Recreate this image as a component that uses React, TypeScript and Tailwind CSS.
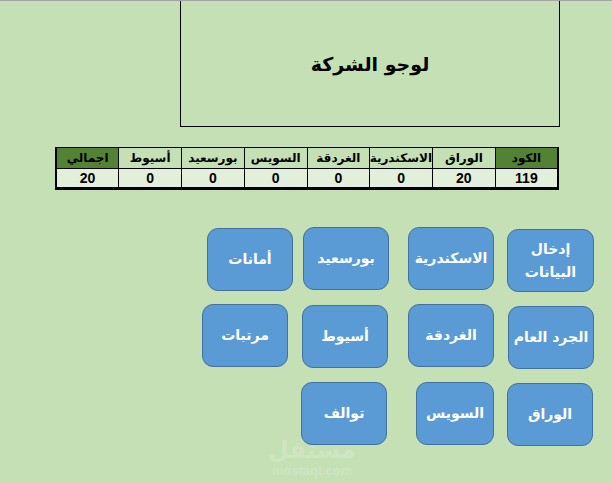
import React from "react";

const arabic = { fontFamily: '"DejaVu Sans", "Noto Sans", sans-serif' };

type BtnProps = { label: React.ReactNode; className?: string };

function ShapeButton({ label, className = "" }: BtnProps) {
  return (
    <div
      className={`flex h-[63px] shrink-0 items-center justify-center rounded-[11px] border border-[#41719c] bg-[#5b9bd5] text-center text-[14px] font-bold leading-[23px] text-white ${className}`}
      style={arabic}
      dir="rtl"
    >
      {label}
    </div>
  );
}

const headers = ["اجمالي", "أسيوط", "بورسعيد", "السويس", "الغردقة", "الاسكندرية", "الوراق", "الكود"];
const values = ["20", "0", "0", "0", "0", "0", "20", "119"];

export default function App() {
  return (
    <div className="relative h-[483px] w-[612px] overflow-hidden bg-[#c5e0b4]">
      <div className="h-[1px] w-full bg-[#a3a3a3]" />

      {/* logo placeholder frame */}
      <div className="ml-[180px] flex h-[126px] w-[380px] items-center justify-center border-x border-b border-black">
        <span className="mt-[2px] text-[19px] font-bold text-black" style={arabic} dir="rtl">
          لوجو الشركة
        </span>
      </div>

      {/* summary sheet */}
      <table className="ml-[55px] mt-[20px] w-[504px] table-fixed border-collapse border-x-2 border-black">
        <tbody>
          <tr className="h-[21px]">
            {headers.map((h, i) => (
              <td
                key={h}
                className={`border border-black p-0 text-center text-[12px] font-bold leading-[19px] text-black ${
                  i === 0 || i === headers.length - 1 ? "bg-[#548235]" : "bg-[#c5e0b4]"
                }`}
                style={arabic}
                dir="rtl"
              >
                {h}
              </td>
            ))}
          </tr>
          <tr className="h-[20px] border-b-[3px] border-black">
            {values.map((v, i) => (
              <td
                key={i}
                className="border border-b-[3px] border-black bg-[#e2efda] p-0 text-center text-[14px] font-bold leading-[18px] text-black"
                style={{ fontFamily: '"Liberation Sans", Arial, sans-serif' }}
              >
                {v}
              </td>
            ))}
          </tr>
        </tbody>
      </table>

      {/* navigation shapes */}
      <div className="mt-[37px] flex h-[65px] items-start">
        <ShapeButton label="أمانات" className="ml-[207px] mt-[1px] w-[86px]" />
        <ShapeButton label="بورسعيد" className="ml-[10px] w-[86px]" />
        <ShapeButton label="الاسكندرية" className="ml-[19px] w-[86px]" />
        <ShapeButton
          label={
            <span>
              إدخال
              <br />
              البيانات
            </span>
          }
          className="ml-[13px] mt-[2px] w-[87px]"
        />
      </div>

      <div className="mt-[12px] flex h-[65px] items-start">
        <ShapeButton label="مرتبات" className="ml-[202px] w-[86px]" />
        <ShapeButton label="أسيوط" className="ml-[14px] mt-[1px] w-[86px]" />
        <ShapeButton label="الغردقة" className="ml-[20px] w-[86px]" />
        <ShapeButton label="الجرد العام" className="ml-[14px] mt-[2px] w-[86px]" />
      </div>

      <div className="mt-[13px] flex h-[65px] items-start">
        <ShapeButton label="توالف" className="ml-[301px] w-[86px]" />
        <ShapeButton label="السويس" className="ml-[29px] w-[78px]" />
        <ShapeButton label="الوراق" className="ml-[13px] mt-[1px] w-[86px]" />
      </div>

      {/* faint site mark */}
      <div className="pointer-events-none absolute left-[268px] top-[438px] flex flex-col items-center leading-none text-white/20">
        <span className="text-[24px] font-bold" style={arabic}>
          مستقل
        </span>
        <span
          className="mt-[2px] text-[13px] font-bold"
          style={{ fontFamily: '"Liberation Sans", Arial, sans-serif' }}
        >
          mostaql.com
        </span>
      </div>
    </div>
  );
}
